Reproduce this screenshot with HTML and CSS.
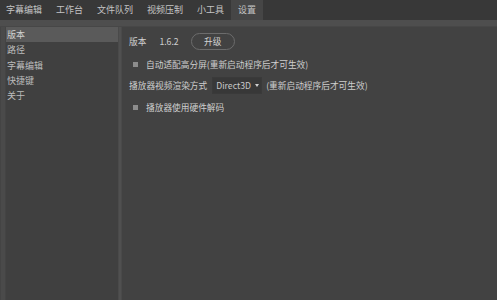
FILE: index.html
```html
<!DOCTYPE html>
<html>
<head>
<meta charset="utf-8">
<link rel="stylesheet" href="styles.css">
</head>
<body>
<div class="app">
  <div class="tabs">
    <div class="tab">字幕编辑</div>
    <div class="tab">工作台</div>
    <div class="tab">文件队列</div>
    <div class="tab">视频压制</div>
    <div class="tab">小工具</div>
    <div class="tab active">设置</div>
  </div>
  <div class="strip"></div>
  <div class="main">
    <div class="edge"></div>
    <div class="side">
      <div class="item sel">版本</div>
      <div class="item">路径</div>
      <div class="item">字幕编辑</div>
      <div class="item">快捷键</div>
      <div class="item">关于</div>
    </div>
    <div class="divider"></div>
    <div class="content">
      <div class="row first">
        <span class="label">版本</span>
        <span class="ver">1.6.2</span>
        <span class="btn">升级</span>
      </div>
      <div class="row">
        <span class="check"></span>
        <span>自动适配高分屏(重新启动程序后才可生效)</span>
      </div>
      <div class="row">
        <span>播放器视频渲染方式</span>
        <span class="select">Direct3D<span class="arrow"></span></span>
        <span class="note">(重新启动程序后才可生效)</span>
      </div>
      <div class="row">
        <span class="check"></span>
        <span>播放器使用硬件解码</span>
      </div>
    </div>
  </div>
</div>
</body>
</html>
```
FILE: styles.css
```css
* { box-sizing: border-box; }
html, body {
  margin: 0;
  padding: 0;
  width: 497px;
  height: 300px;
  overflow: hidden;
  background: #424242;
}
.app {
  display: flex;
  flex-direction: column;
  height: 300px;
  font-family: "Noto Sans CJK SC", "Noto Sans", sans-serif;
  font-size: 9px;
  color: #cfcfcf;
}
.tabs {
  display: flex;
  height: 20px;
  background: #383838;
  color: #c4c4c4;
}
.tab {
  padding: 0 7px;
  line-height: 19px;
  white-space: nowrap;
}
.tab:first-child { padding-left: 6px; }
.tab.active { background: #464646; }
.strip {
  height: 7px;
  background: #4e4e4e;
  border-bottom: 1px solid #474747;
}
.main {
  flex: 1;
  display: flex;
}
.edge {
  width: 6px;
  background: #4a4a4a;
  border-left: 1px solid #444;
  border-right: 1px solid #444;
}
.side {
  width: 112px;
  background: #404040;
}
.item {
  height: 15.3px;
  line-height: 15.3px;
  padding-left: 1px;
  color: #bcbcbc;
  white-space: nowrap;
}
.item.sel { background: #5a5a5a; color: #d0d0d0; }
.divider {
  width: 4px;
  background: #505050;
  border-left: 1px solid #4a4a4a;
  border-right: 1px solid #4a4a4a;
}
.content {
  flex: 1;
  padding: 6px 0 0 7px;
  display: flex;
  flex-direction: column;
  font-size: 8.7px;
}
.row {
  height: 21.5px;
  display: flex;
  align-items: center;
  white-space: nowrap;
}
.row.first {
  height: 17px;
  margin-bottom: 3.5px;
}
.ver { margin-left: 13px; }
.btn {
  margin-left: 12px;
  width: 44px;
  height: 17px;
  border: 1px solid #6c6c6c;
  border-radius: 9px;
  display: flex;
  align-items: center;
  justify-content: center;
  color: #d4d4d4;
}
.check {
  width: 5px;
  height: 5px;
  background: #8c8c8c;
  margin-left: 4px;
  margin-right: 8px;
}
.select {
  margin-left: 5px;
  width: 50px;
  height: 17px;
  background: #383838;
  border: 1px solid #3a3a3a;
  display: flex;
  align-items: center;
  padding-left: 3px;
  color: #c8c8c8;
}
.arrow {
  margin-left: 4px;
  width: 0;
  height: 0;
  border-left: 2.5px solid transparent;
  border-right: 2.5px solid transparent;
  border-top: 3px solid #d0d0d0;
}
.note { margin-left: 4px; }
```
